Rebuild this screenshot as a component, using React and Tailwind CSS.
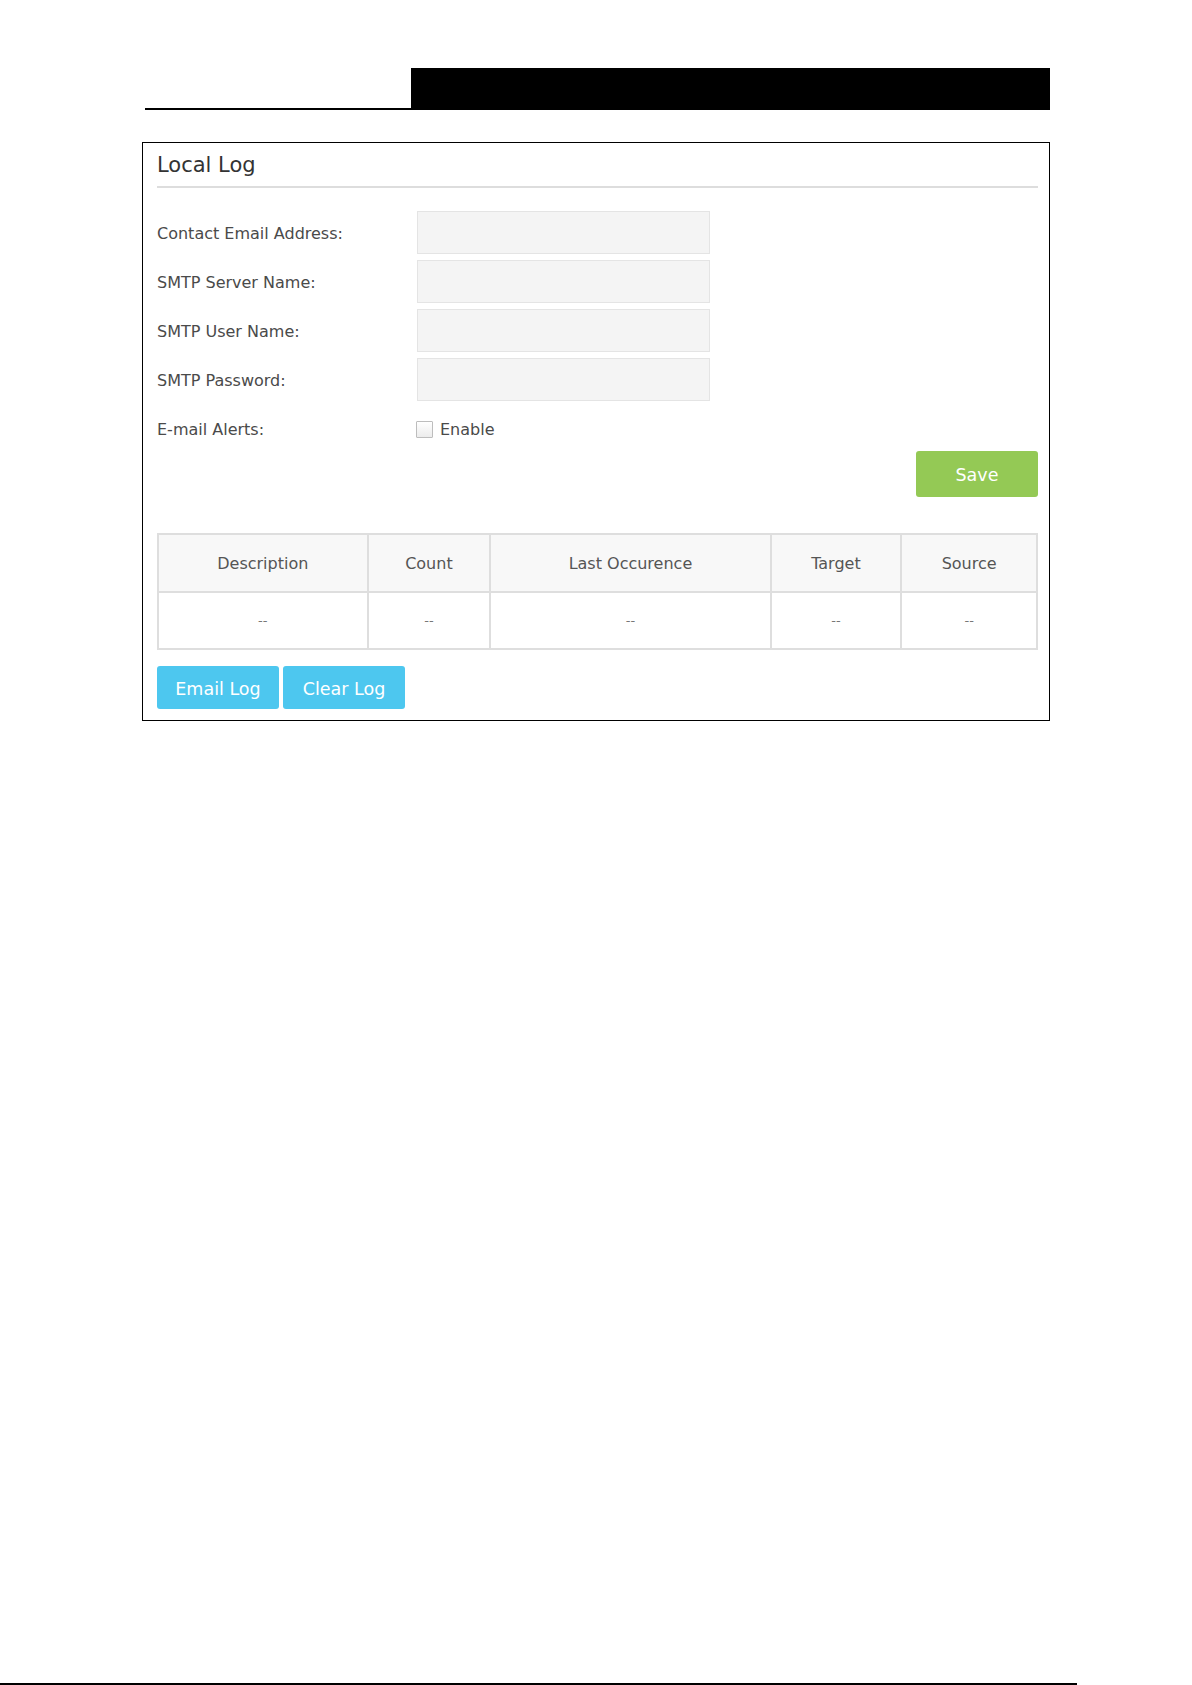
import React from 'react';

const fields = [
    'Contact Email Address:',
    'SMTP Server Name:',
    'SMTP User Name:',
    'SMTP Password:',
];

const columns = [
    { name: 'Description', w: 'w-[210px]' },
    { name: 'Count', w: 'w-[123px]' },
    { name: 'Last Occurence', w: 'w-[281px]' },
    { name: 'Target', w: 'w-[131px]' },
    { name: 'Source', w: 'w-[136px]' },
];

const App = () => {
    return (
        <div className="w-[1192px] h-[1685px] bg-white flex flex-col font-['DejaVu_Sans',sans-serif]">
            {/* Page header */}
            <div className="flex ml-[145px] mt-[68px]">
                <div className="w-[266px] h-[42px] border-b-2 border-black"></div>
                <div className="w-[639px] h-[42px] bg-black"></div>
            </div>

            {/* Local Log panel */}
            <div className="ml-[142px] mt-[32px] w-[908px] border border-black pl-[14px] pr-[11px] pt-[5px] pb-[11px]">
                <h2 className="text-[21px] leading-[34px] text-[#333333] h-[38px]">Local Log</h2>
                <div className="h-[2px] bg-[#dddddd]"></div>

                <div className="mt-[22px] flex flex-col gap-[5px]">
                    {fields.map((label) => (
                        <div key={label} className="flex items-center h-[44px]">
                            <span className="w-[260px] pt-[4px] text-[16px] text-[#4a4a4a]">{label}</span>
                            <div className="w-[293px] h-[43px] bg-[#f4f4f4] border border-[#e4e4e4]"></div>
                        </div>
                    ))}
                    <div className="flex items-center h-[44px]">
                        <span className="w-[259px] pt-[4px] text-[16px] text-[#4a4a4a]">E-mail Alerts:</span>
                        <span className="w-[17px] h-[17px] mt-[2px] border border-[#bdbdbd] bg-gradient-to-b from-[#ffffff] to-[#ececec] rounded-[1px]"></span>
                        <span className="ml-[7px] pt-[4px] text-[16px] text-[#4a4a4a]">Enable</span>
                    </div>
                </div>

                <div className="flex justify-end mt-[1px]">
                    <button className="w-[122px] h-[46px] pt-[3px] rounded-[3px] bg-[#94c955] text-white text-[17.5px]">Save</button>
                </div>

                {/* Log table */}
                <table className="mt-[36px] w-[881px] border-collapse border-2 border-[#dedede] text-[16px] text-center">
                    <thead>
                        <tr className="bg-[#f8f8f8] h-[58px]">
                            {columns.map((col) => (
                                <th key={col.name} className={`${col.w} pt-[2px] border-2 border-[#dedede] font-normal text-[#555555]`}>
                                    {col.name}
                                </th>
                            ))}
                        </tr>
                    </thead>
                    <tbody>
                        <tr className="h-[57px]">
                            {columns.map((col) => (
                                <td key={col.name} className="border-2 border-[#dedede] text-[#777777] text-[13px]">--</td>
                            ))}
                        </tr>
                    </tbody>
                </table>

                <div className="mt-[16px] flex gap-[4px]">
                    <button className="w-[122px] h-[43px] pt-[3px] rounded-[3px] bg-[#4dc7ef] text-white text-[17.5px]">Email Log</button>
                    <button className="w-[122px] h-[43px] pt-[3px] rounded-[3px] bg-[#4dc7ef] text-white text-[17.5px]">Clear Log</button>
                </div>
            </div>

            {/* Page footer rule */}
            <div className="mt-auto w-[1077px] h-[2px] bg-black"></div>
        </div>
    );
};

export default App;
